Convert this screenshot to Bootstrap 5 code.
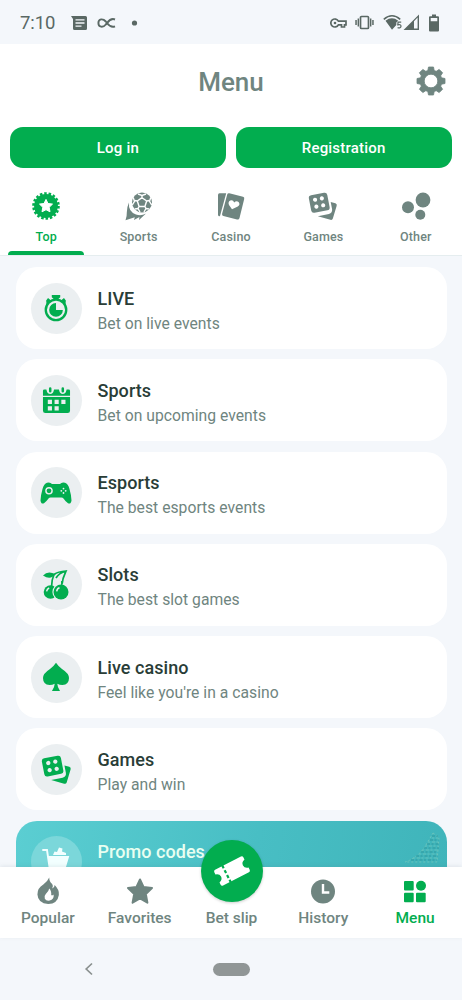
<!DOCTYPE html>
<html lang="en">
<head>
<meta charset="utf-8">
<meta name="viewport" content="width=device-width, initial-scale=1">
<title>Menu</title>
<link href="https://cdn.jsdelivr.net/npm/bootstrap@5.3.0/dist/css/bootstrap.min.css" rel="stylesheet">
<style>
:root{--green:#02ad4f;--grey:#6f8580;--pale:#f4f7fb}
body{font-family:Roboto,"Liberation Sans",sans-serif;background:var(--pale);color:var(--grey);height:1000px;overflow:hidden}
svg{display:block;flex:none;fill:currentColor}
.status{height:44px;padding:1px 22px 0 20px;color:#5a6864}
.clock{font-size:18.5px;letter-spacing:-.1px;line-height:44px;width:51px}
.topbar{height:74px;display:grid;grid-template-columns:1fr auto 1fr;padding:0 16px}
.page-title{font-size:26px;font-weight:500;letter-spacing:0;line-height:1;padding-top:2px}
.auth{padding:9px 10.5px 0 10px;gap:10px}
.auth .btn{--bs-btn-color:#fff;--bs-btn-bg:var(--green);--bs-btn-border-width:0;--bs-btn-hover-bg:#029846;--bs-btn-hover-color:#fff;height:41px;padding-top:8px;border-radius:13px;font-size:15px;font-weight:500;letter-spacing:.2px}
.tabs{height:88px;border-bottom:1px solid #e5edef}
.tabs .nav-link{height:88px;padding:24px 0 0;color:var(--grey);font-size:12.5px;font-weight:500;letter-spacing:.15px;position:relative;line-height:16px}
.tabs .nav-link svg{margin:-1px auto 8px}
.tabs .active::after{content:"";position:absolute;left:8px;right:8px;bottom:1px;height:4px;border-radius:4px 4px 0 0;background:var(--green)}
.tabs .active,.bottom .nav-link.active{color:var(--green)}
.tabs .nav-link.active{color:var(--green)}
.feed{height:611px;padding:11px 15px 0 15.5px;gap:10.3px;overflow:hidden}
.tile{height:82px;flex:none;border:0;border-radius:21px;padding:0 15px;gap:16px}
.tile-text{padding-top:5px}
.disc{width:51px;height:51px;border-radius:50%;background:#ebeff1;color:var(--green);flex:none}
.tile-name{font-size:18px;line-height:24px;font-weight:500;color:#293d37;letter-spacing:.05px}
.tile-note{font-size:15.7px;line-height:22px;margin-top:2px;letter-spacing:.02px;white-space:nowrap}
.promo{background:linear-gradient(100deg,#5bced2,#48bec4 55%,#3fb4ba)}
.promo .disc{background:#7bd7da;color:#f2ffff}
.promo .tile-name{color:#e9fff1}
.grain{right:3px;top:9px}
.bottom{height:71px;padding:0 1px 0 2px;box-shadow:0 -1px 4px #60708020;z-index:2}
.bottom .nav-link{padding:10px 0 0;color:var(--grey);font-size:15.5px;font-weight:500;line-height:20px;letter-spacing:0}
.bottom .nav-link svg{margin:0 auto 1px}
.slip{width:62px;height:62px;border-radius:50%;background:var(--green);color:#fff;left:calc(50% + .5px);top:-27px;transform:translateX(-50%);box-shadow:0 1px 3px #0003}
.bottom .slip svg{margin:0}
.system{height:62px;color:#8a908f}
.pill{width:37px;height:13px;border-radius:7px;background:#909696}
</style>
</head>
<body>
<svg width="0" height="0" class="position-absolute">
<defs>
<symbol id="dice" viewBox="-1 -1.500 32 32"><g transform="rotate(-11 11 11)"><path fill-rule="evenodd" d="M4 1.500H18Q21 1.500 21 4.500V17.500Q21 20.500 18 20.500H4Q1 20.500 1 17.500V4.500Q1 1.500 4 1.500ZM7.200 4.800a2.200 2.200 0 1 0 .01 0ZM14.600 4.800a2.200 2.200 0 1 0 .01 0ZM7.200 12.300a2.200 2.200 0 1 0 .01 0ZM14.600 12.300a2.200 2.200 0 1 0 .01 0Z"/></g><path d="M23.200 10.300L28.200 11.600Q30.200 12.200 29.600 14.200L25.500 27.800Q24.900 29.800 22.900 29.200L9.500 25.300L21.300 22.900Q25.200 21.800 24.700 18Z"/></symbol>
</defs>
</svg>

<header class="status d-flex align-items-center">
 <span class="clock">7:10</span>
 <svg width="16" height="14" viewBox="0 0 16 14"><path fill-rule="evenodd" d="M0 0H14.500Q16 0 16 1.500V12.500Q16 14 14.500 14H3.500Q2 14 2 12.500V3ZM4.500 3.200V4.600H13.500V3.200ZM4.500 6.300V7.700H13.500V6.300ZM4.500 9.400V10.800H10.500V9.400Z"/></svg>
 <svg style="margin-left:9px" width="20" height="12" viewBox="0 0 20 12"><path d="M19 2.500C14 .4 11.800 5.300 9.800 7.500C7 10.900 2.400 10.400 2.400 6S7 1.300 9.800 4.500C11.800 6.900 14 11.500 19 9.400" fill="none" stroke="currentColor" stroke-width="1.900"/></svg>
 <svg style="margin-left:14px" width="8" height="8" viewBox="0 0 8 8"><circle cx="4.500" cy="4" r="2.600"/></svg>
 <div class="ms-auto d-flex align-items-center">
  <svg width="17" height="12" viewBox="0 0 17 12"><path d="M8.400 4.200H16V7.800H14.500V10H11.500V7.800H8.400A4 4 0 1 1 8.400 4.200Z" fill="none" stroke="currentColor" stroke-width="1.700"/><circle cx="5" cy="6" r="1.300"/></svg>
  <svg class="ms-2" width="19" height="15" viewBox="0 0 19 15"><rect x="5.500" y="1.500" width="8" height="12" rx="1" fill="none" stroke="currentColor" stroke-width="1.700"/><path d="M.3 5h1.500v5H.3ZM2.600 3.500h1.400v8H2.600ZM15 3.500h1.400v8h-1.400ZM17.200 5h1.500v5h-1.500Z"/></svg>
  <svg style="margin-left:9px" width="20" height="17" viewBox="0 0 20 17"><path d="M.8 5.300Q9 -1.800 17.200 5.300" fill="none" stroke="currentColor" stroke-width="1.600"/><path d="M2.500 6.700Q9 1.800 15.200 6.700L13.300 8.500V11L9 15.700Z"/><path d="M18.200 8.200H15.100L14.800 10.800Q17.900 10 18 12.100Q17.800 14.500 14.600 13.600" fill="none" stroke="currentColor" stroke-width="1.200"/></svg>
  <svg width="17" height="17" viewBox="0 0 17 17"><path fill-rule="evenodd" d="M.5 16L16 .5V16ZM11 7.200V14.600H14.600V3.600Z"/></svg>
  <svg style="margin-left:8px" width="12" height="18" viewBox="0 0 12 18"><path fill-rule="evenodd" d="M4 .5H8V2.300H10Q11 2.300 11 3.300V16.500Q11 17.500 10 17.500H2Q1 17.500 1 16.500V3.300Q1 2.300 2 2.300H4ZM2.700 4V7.300H9.300V4Z"/></svg>
 </div>
</header>

<div class="bg-white">
 <div class="topbar align-items-center">
  <span></span><h1 class="page-title m-0">Menu</h1>
  <svg class="ms-auto" width="30" height="30" viewBox="0 0 30 30"><path fill-rule="evenodd" d="M12.500 1H17.500L18.200 4.500L20.200 5.300L23.200 3.400L26.600 6.800L24.700 9.800L25.500 11.800L29 12.500V17.500L25.500 18.200L24.700 20.200L26.600 23.200L23.200 26.600L20.200 24.700L18.200 25.500L17.500 29H12.500L11.800 25.500L9.800 24.700L6.800 26.600L3.400 23.200L5.300 20.200L4.500 18.200L1 17.500V12.500L4.500 11.800L5.300 9.800L3.400 6.800L6.800 3.400L9.800 5.300L11.800 4.500ZM15 8.200A6.800 6.800 0 1 0 15 21.800A6.800 6.800 0 1 0 15 8.200Z" stroke="currentColor" stroke-width=".8" stroke-linejoin="round"/></svg>
 </div>
 <div class="auth d-flex">
  <button class="btn flex-fill w-50">Log in</button><button class="btn flex-fill w-50">Registration</button>
 </div>
 <nav class="tabs nav nav-fill flex-nowrap w-100">
  <a class="nav-link active w-100" href="#"><svg width="30" height="30" viewBox="0 0 30 30"><circle cx="15" cy="15" r="11.900"/><circle cx="15" cy="15" r="12.400" fill="none" stroke="currentColor" stroke-width="2.800" stroke-dasharray="2.500 1.828"/><path fill="#fff" stroke="#fff" stroke-linejoin="round" d="M15 8.400L17 12.500L21.500 13.100L18.200 16.300L19 20.800L15 18.700L11 20.800L11.800 16.300L8.500 13.100L13 12.500Z"/></svg>Top</a>
  <a class="nav-link w-100" href="#"><svg width="30" height="30" viewBox="0 -.5 30 30"><path d="M5 11Q4 20 12 23Q17 25 22 22L15 28.500L15.500 25.500L10 28.600L10.800 25.800L1.500 28.700Q3 25 2.800 21Q3 15 5 11Z"/><circle cx="18" cy="11" r="11.200" fill="#fff"/><circle cx="18" cy="11" r="10"/><g fill="none" stroke="#fff" stroke-width="1.400"><path d="M18 6.200L22.700 9.500L20.900 15H15.100L13.300 9.500ZM18 6.200V4M22.700 9.500L25.500 9M20.900 15L22 17M15.100 15L14 17M13.300 9.500L10.500 9"/><path d="M14 2.500L18 4L22 2.500M26.800 6L25.500 9.800L27.700 13.500M9.200 6L10.500 9.800L8.300 13.500M25.200 17.500L22 17L20 20.500M10.800 17.500L14 17L16 20.500"/></g></svg>Sports</a>
  <a class="nav-link w-100" href="#"><svg width="30" height="30" viewBox="0 0 30 30"><path d="M3.500 2.300H10.200L4 25Q2 26 2 23.500V4Q2 2.300 3.500 2.300Z"/><path fill-rule="evenodd" d="M13.300 2.300L27 5.700Q28.700 6.200 28.200 8L23.500 27Q23 29 21 28.500L7.400 25Q5.600 24.500 6.100 22.700L11.200 3.600Q11.700 1.900 13.300 2.300ZM16 18.300L21.800 15.500Q24.600 13.500 22.600 11Q20.400 9 18.200 11.600Q17 8.300 14.200 9.500Q11.700 11 13 14Z"/></svg>Casino</a>
  <a class="nav-link w-100" href="#"><svg width="30" height="30"><use href="#dice"/></svg>Games</a>
  <a class="nav-link w-100" href="#"><svg width="30" height="30" viewBox="0 0 30 30"><circle cx="22" cy="9" r="7.400"/><circle cx="7" cy="16.300" r="6"/><circle cx="19.300" cy="23.700" r="5"/></svg>Other</a>
 </nav>
</div>

<main class="feed d-flex flex-column">
 <div class="tile card flex-row align-items-center">
  <span class="disc d-flex align-items-center justify-content-center"><svg width="30" height="30" viewBox="-1 0 32 30"><path d="M10.500 1H19.500V3.500L17.500 5.500H12.500L10.500 3.500ZM6.500 4.300L10 7.300L5 12L4.500 7ZM23.500 4.300L20 7.300L25 12L25.500 7Z"/><circle cx="15" cy="17" r="10.900" fill="none" stroke="currentColor" stroke-width="2.500"/><path d="M15 9.700V17H22.300A7.300 7.300 0 1 1 15 9.700Z"/></svg></span>
  <div class="tile-text"><div class="tile-name">LIVE</div><div class="tile-note">Bet on live events</div></div>
 </div>
 <div class="tile card flex-row align-items-center">
  <span class="disc d-flex align-items-center justify-content-center"><svg width="29" height="29" viewBox="0 0 30 30"><path d="M1 10V5Q1 3.500 2.500 3.500H4.500Q5.500 8.300 8.500 8.300T12.500 3.500H17.500Q18.500 8.300 21.500 8.300T25.500 3.500H27.500Q29 3.500 29 5V10Z"/><path d="M8.500 2.500V5.500M21.500 2.500V5.500" stroke="currentColor" stroke-width="2.600" stroke-linecap="round"/><path fill-rule="evenodd" d="M1 11.500H29V25.500Q29 28 26.500 28H3.500Q1 28 1 25.500ZM6 14.200V18.500H10.300V14.200ZM13 14.200V18.500H17.300V14.200ZM20 14.200V18.500H24.300V14.200ZM6 21V25.300H10.300V21ZM13 21V25.300H17.300V21Z"/></svg></span>
  <div class="tile-text"><div class="tile-name">Sports</div><div class="tile-note">Bet on upcoming events</div></div>
 </div>
 <div class="tile card flex-row align-items-center">
  <span class="disc d-flex align-items-center justify-content-center"><svg width="32" height="24" viewBox="0 0 32 24"><path d="M7 1.800Q10 .7 12 3H20Q22 .7 25 1.800Q28 2.500 29.500 8Q31.500 15 31.500 19.500Q31 23.500 28 22.300Q25.800 21 23.500 17.500Q22.700 16.500 21.500 16.500H10.500Q9.300 16.500 8.500 17.500Q6 21 4 22.300Q1 23.500.5 19.500Q.5 15 2.500 8Q4 2.500 7 1.800Z"/><circle cx="9" cy="9.800" r="3.100" fill="none" stroke="#ebeff1" stroke-width="1.400"/><g fill="#ebeff1"><circle cx="23.500" cy="7.600" r=".9"/><circle cx="23.500" cy="12" r=".9"/><circle cx="21.300" cy="9.800" r=".9"/><circle cx="25.700" cy="9.800" r=".9"/></g></svg></span>
  <div class="tile-text"><div class="tile-name">Esports</div><div class="tile-note">The best esports events</div></div>
 </div>
 <div class="tile card flex-row align-items-center">
  <span class="disc d-flex align-items-center justify-content-center"><svg width="30" height="30" viewBox="0 0 30 30"><path d="M2 5.500Q7 0 14.500 4.300Q9.500 10.500 2 5.500Z"/><path d="M10.500 17Q10.500 10 13 4.500Q17 1.500 25 1Q21.500 8 20.800 16M13 5Q10 4 8 5M15 8Q18 3 24 1.500" fill="none" stroke="currentColor" stroke-width="1.700"/><circle cx="9.500" cy="22" r="6.800"/><circle cx="20" cy="22" r="8.600" fill="#ebeff1"/><circle cx="20" cy="22" r="7.500"/><path d="M15.700 21.300Q16 18.500 18.500 17.800M5.600 21.300Q6 18.700 8.200 18" fill="none" stroke="#ebeff1" stroke-width="1.500"/><path d="M20.800 11V17" stroke="currentColor" stroke-width="1.500"/></svg></span>
  <div class="tile-text"><div class="tile-name">Slots</div><div class="tile-note">The best slot games</div></div>
 </div>
 <div class="tile card flex-row align-items-center">
  <span class="disc d-flex align-items-center justify-content-center"><svg width="30" height="30" viewBox="0 0 30 30"><path d="M15 .8Q17 4 21 7Q28 11.500 28 16Q28 22.500 21.500 23Q18.500 23 16.300 21.700Q16.500 25.500 19 29H11Q13.500 25.500 13.700 21.700Q11.500 23 8.500 23Q2 22.500 2 16Q2 11.500 9 7Q13 4 15 .8Z"/></svg></span>
  <div class="tile-text"><div class="tile-name">Live casino</div><div class="tile-note">Feel like you're in a casino</div></div>
 </div>
 <div class="tile card flex-row align-items-center">
  <span class="disc d-flex align-items-center justify-content-center"><svg width="31" height="31"><use href="#dice"/></svg></span>
  <div class="tile-text"><div class="tile-name">Games</div><div class="tile-note">Play and win</div></div>
 </div>
 <div class="tile promo card flex-row align-items-center">
  <span class="disc d-flex align-items-center justify-content-center"><svg width="30" height="30" viewBox="0 0 30 30"><path d="M2 3H6L8.500 20H24L27 10H8" fill="none" stroke="currentColor" stroke-width="1.900" stroke-linecap="round"/><path d="M7 10H27L24 20H8.500ZM12 8L13.500 4.500L16 5L18 .5L21.500 1.500L21 4.500L25 6V8Z"/></svg></span>
  <div class="tile-text"><div class="tile-name">Promo codes</div><div class="tile-note">&nbsp;</div></div>
  <svg class="grain position-absolute" width="40" height="36" viewBox="0 0 40 36"><path d="M29 3L35 7L33 32H1Q14 28 22 15Z" fill="none" stroke="#75c7ba" stroke-width=".8" stroke-dasharray="2 2"/><path d="M28 6H34M26 10H35M23 14H35M20 18H35M17 22H34M12 26H34M7 30H33" stroke="#2f989d" stroke-width="1" stroke-dasharray="3 1.500 2 2"/><path d="M28 8H34M24 12H34M21 16H34M18 20H34M15 24H34M9 28H33" stroke="#6cc5bd" stroke-width=".8" stroke-dasharray="2 2 3 1.500"/></svg>
 </div>
</main>

<nav class="bottom nav nav-fill flex-nowrap bg-white position-relative">
 <a class="nav-link w-100" href="#"><svg width="30" height="30" viewBox="-.5 .8 30.500 30.500"><path fill-rule="evenodd" d="M16 1.300Q16 5.500 19 8Q20.500 10 19 12.500Q21.500 12 21.500 9Q26.500 14 25.800 19Q24.500 27.800 15 28.300Q4.500 27.500 4 18.500Q4 12 10 8.500Q14.500 5 16 1.300ZM16 12.500Q15.500 15.500 12.500 18Q10.200 20.500 11.500 23Q13 25.500 16.500 24.800Q21 23.500 20.500 18.500Q19.500 19.700 18 19.300Q18.500 15 16 12.500Z"/></svg>Popular</a>
 <a class="nav-link w-100" href="#"><svg width="30" height="30" viewBox="0 0 30 30"><path stroke="currentColor" stroke-width="2" stroke-linejoin="round" d="M15 2.500L18.500 10L27 11L20.800 17L22.400 25.700L15 21.500L7.600 25.700L9.200 17L3 11L11.500 10Z"/></svg>Favorites</a>
 <a class="nav-link w-100" href="#"><svg width="30" height="30"></svg>Bet slip
  <span class="slip position-absolute d-flex align-items-center justify-content-center"><svg width="40" height="32" viewBox="0 0 40 32"><g transform="rotate(-27 20 16)"><path d="M5.500 7.200H34.500Q36.300 7.200 36.300 9V11.500Q32.300 12.500 32.300 16T36.300 20.500V23Q36.300 24.800 34.500 24.800H5.500Q3.700 24.800 3.700 23V20.500Q7.700 19.500 7.700 16T3.700 11.500V9Q3.700 7.200 5.500 7.200Z"/><path d="M13.800 6.500V25.500" stroke="#02ad4f" stroke-width="2.200" stroke-dasharray="3.300 2.100"/></g></svg></span></a>
 <a class="nav-link w-100" href="#"><svg width="30" height="30" viewBox="0 0 30 30"><circle cx="15" cy="14.500" r="12"/><path d="M15 7V15.500H21.300" fill="none" stroke="#fff" stroke-width="2.400"/></svg>History</a>
 <a class="nav-link active w-100" href="#"><svg width="30" height="30" viewBox="0 0 30 30"><rect x="4" y="4" width="9.700" height="9.500" rx="1"/><circle cx="21" cy="8.700" r="5"/><rect x="4" y="15.700" width="9.700" height="9.500" rx="1"/><rect x="16" y="15.700" width="9.700" height="9.500" rx="1"/></svg>Menu</a>
</nav>

<footer class="system position-relative d-flex align-items-center">
 <svg style="margin-left:84px;margin-right:119px" width="10" height="14" viewBox="0 0 10 14"><path d="M8 1.500L2.200 7L8 12.500" fill="none" stroke="currentColor" stroke-width="1.700"/></svg>
 <span class="pill"></span>
</footer>
<script src="https://cdn.jsdelivr.net/npm/bootstrap@5.3.0/dist/js/bootstrap.bundle.min.js"></script>
</body>
</html>
